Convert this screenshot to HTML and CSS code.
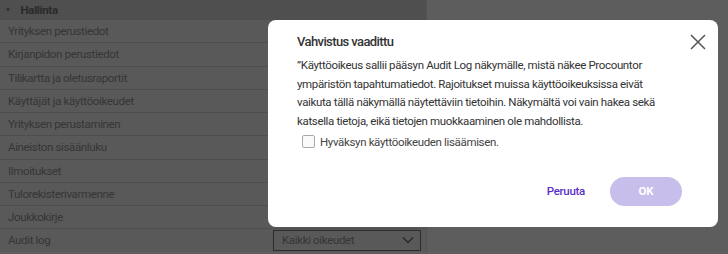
FILE: index.html
```html
<!DOCTYPE html>
<html lang="fi">
<head>
<meta charset="utf-8">
<title>Vahvistus vaadittu</title>
<link rel="stylesheet" href="styles.css">
</head>
<body>
<div class="page">
  <div class="table">
    <div class="head-row"><span class="caret">&#9660;</span><span class="head-label">Hallinta</span></div>
    <div class="row"><span class="cell-name">Yrityksen perustiedot</span><span class="cell-value"></span></div>
    <div class="row"><span class="cell-name">Kirjanpidon perustiedot</span><span class="cell-value"></span></div>
    <div class="row"><span class="cell-name">Tilikartta ja oletusraportit</span><span class="cell-value"></span></div>
    <div class="row"><span class="cell-name">Käyttäjät ja käyttöoikeudet</span><span class="cell-value"></span></div>
    <div class="row"><span class="cell-name">Yrityksen perustaminen</span><span class="cell-value"></span></div>
    <div class="row"><span class="cell-name">Aineiston sisäänluku</span><span class="cell-value"></span></div>
    <div class="row"><span class="cell-name">Ilmoitukset</span><span class="cell-value"></span></div>
    <div class="row"><span class="cell-name">Tulorekisterivarmenne</span><span class="cell-value"></span></div>
    <div class="row"><span class="cell-name">Joukkokirje</span><span class="cell-value"></span></div>
    <div class="row"><span class="cell-name">Audit log</span><span class="cell-value"><span class="select"><span>Kaikki oikeudet</span><svg class="chev" width="12" height="8" viewBox="0 0 12 8"><path d="M1 1.5 L6 6.5 L11 1.5" fill="none" stroke="#555" stroke-width="1.1"/></svg></span></span></div>
  </div>
</div>
<div class="overlay">
  <div class="dialog">
    <button class="close" aria-label="Sulje"><svg width="16" height="16" viewBox="0 0 16 16"><path d="M1 1 L15 15 M15 1 L1 15" stroke="#555" stroke-width="1.5" fill="none"/></svg></button>
    <h2 class="title">Vahvistus vaadittu</h2>
    <p class="text">”Käyttöoikeus sallii pääsyn Audit Log näkymälle, mistä näkee Procountor<br>ympäristön tapahtumatiedot. Rajoitukset muissa käyttöoikeuksissa eivät<br>vaikuta tällä näkymällä näytettäviin tietoihin. Näkymältä voi vain hakea sekä<br>katsella tietoja, eikä tietojen muokkaaminen ole mahdollista.</p>
    <label class="check"><span class="box"></span><span>Hyväksyn käyttöoikeuden lisäämisen.</span></label>
    <div class="actions">
      <button class="btn-link">Peruuta</button>
      <button class="btn-ok">OK</button>
    </div>
  </div>
</div>
</body>
</html>
```
FILE: styles.css
```css
* { box-sizing: border-box; }
html, body { margin: 0; padding: 0; }
body {
  width: 728px;
  height: 254px;
  overflow: hidden;
  background: #e9e9e9;
  font-family: Roboto, "Liberation Sans", sans-serif;
  font-size: 11.5px;
  letter-spacing: -0.35px;
  color: #333;
  position: relative;
}
.page { display: flex; }
.table {
  width: 427px;
  background: #dedede;
  border-right: 1px solid #cfcfcf;
}
.head-row {
  height: 19px;
  display: flex;
  align-items: center;
  background: #c6c6c6;
  font-weight: 700;
  color: #6a6a6a;
  padding-left: 5px;
}
.caret { font-size: 6px; margin-right: 10px; }
.head-label { font-size: 11.5px; }
.row {
  height: 23.25px;
  display: flex;
  align-items: center;
  border-top: 1px solid #c4c4c4;
  color: #888;
}
.cell-name { width: 268px; padding-left: 8px; }
.cell-value { flex: 1; padding-left: 5px; display: flex; }
.select {
  width: 148px;
  height: 21px;
  border: 1px solid #6e6e6e;
  display: flex;
  align-items: center;
  justify-content: space-between;
  padding: 0 6px 0 8px;
}
.overlay {
  position: absolute;
  inset: 0;
  background: rgba(0, 0, 0, 0.6);
}
.dialog {
  position: absolute;
  left: 268px;
  top: 20px;
  width: 450px;
  height: 207px;
  background: #fff;
  border-radius: 8px;
  padding: 12px 29px 0 29px;
  display: flex;
  flex-direction: column;
}
.close {
  position: absolute;
  right: 12px;
  top: 14px;
  background: none;
  border: 0;
  padding: 0;
  width: 16px;
  height: 16px;
  display: flex;
}
.title {
  margin: 0;
  font-size: 13px;
  font-weight: 500;
  letter-spacing: -0.6px;
  color: #333;
  line-height: 20px;
}
.text {
  margin: 4px 0 0 0;
  line-height: 18.7px;
  color: #333;
  white-space: nowrap;
}
.check {
  display: flex;
  align-items: center;
  gap: 5px;
  margin: 4px 0 0 5px;
  color: #444;
}
.box {
  width: 13px;
  height: 13px;
  border: 1px solid #aaa;
  border-radius: 2px;
  background: #fafafa;
}
.actions {
  display: flex;
  justify-content: flex-end;
  align-items: center;
  gap: 25px;
  margin-top: 28px;
  padding-right: 7px;
}
.btn-link {
  background: none;
  border: 0;
  font: inherit;
  letter-spacing: -0.3px;
  font-weight: 500;
  color: #5a2fc8;
  padding: 0;
}
.btn-ok {
  width: 72px;
  height: 29px;
  border-radius: 15px;
  border: 0;
  background: #c7beeb;
  color: #fff;
  font: inherit;
  font-weight: 700;
}
```
